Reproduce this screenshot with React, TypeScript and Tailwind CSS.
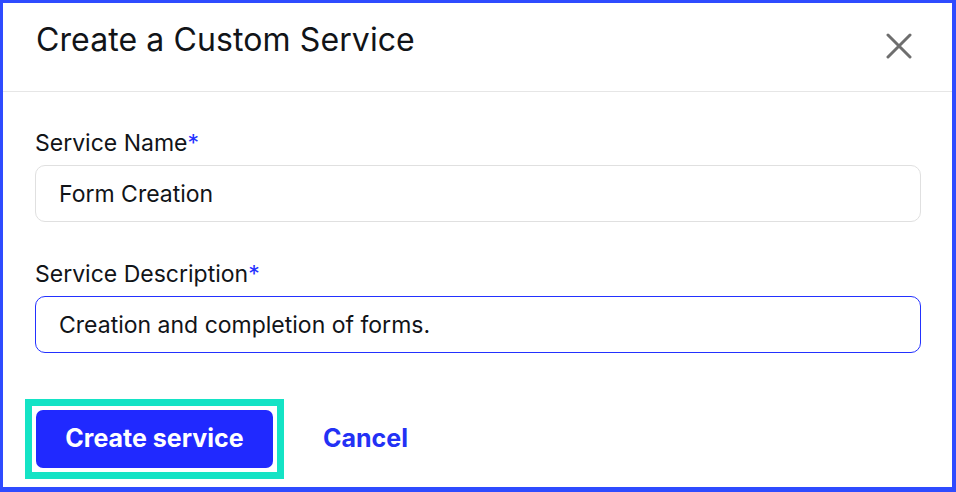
export default function App() {
  return (
    <div
      className="w-[956px] h-[492px] bg-white border-[#2f4bff] border-t-[3px] border-l-[3px] border-r-[4px] border-b-[5px] text-[#111418] overflow-hidden"
      style={{ fontFamily: "Inter, 'Noto Sans', sans-serif" }}
    >
      {/* Header */}
      <div className="h-[89px] border-b border-[#e6e6e6] flex items-start justify-between pl-[33px] pr-[40px]">
        <h1 className="pt-[17px] text-[32px] leading-[40px] font-normal tracking-[0.1px]">
          Create a Custom Service
        </h1>
        <button className="mt-[30px] w-[26px] h-[26px] flex items-center justify-center text-[#6e6e6e]">
          <svg width="26" height="26" viewBox="0 0 26 26" fill="none">
            <path
              d="M2 2L24 24M24 2L2 24"
              stroke="currentColor"
              strokeWidth="3"
              strokeLinecap="round"
            />
          </svg>
        </button>
      </div>

      {/* Form */}
      <div className="px-[32px] pt-[37px]">
        <label className="block text-[23px] leading-[28px]">
          Service Name<span className="text-[#2331ff]">*</span>
        </label>
        <div className="mt-[8px] h-[57px] w-[886px] rounded-[10px] border border-[#e0e0e0] flex items-center pl-[23px] pt-[2px] text-[23px]">
          Form Creation
        </div>

        <label className="block mt-[38px] text-[23px] leading-[28px]">
          Service Description<span className="text-[#2331ff]">*</span>
        </label>
        <div className="mt-[8px] h-[57px] w-[886px] rounded-[10px] border border-[#2331ff] flex items-center pl-[23px] pt-[2px] text-[23px]">
          Creation and completion of forms.
        </div>

        {/* Actions */}
        <div className="mt-[46px] -ml-[10px] flex items-center gap-[39px]">
          <div className="border-[7px] border-[#14e3c5] p-[4px]">
            <button className="w-[237px] h-[58px] rounded-[7px] bg-[#2029ff] text-white text-[25px] font-bold">
              Create service
            </button>
          </div>
          <button className="text-[25px] font-bold text-[#2331f5]">Cancel</button>
        </div>
      </div>
    </div>
  );
}
